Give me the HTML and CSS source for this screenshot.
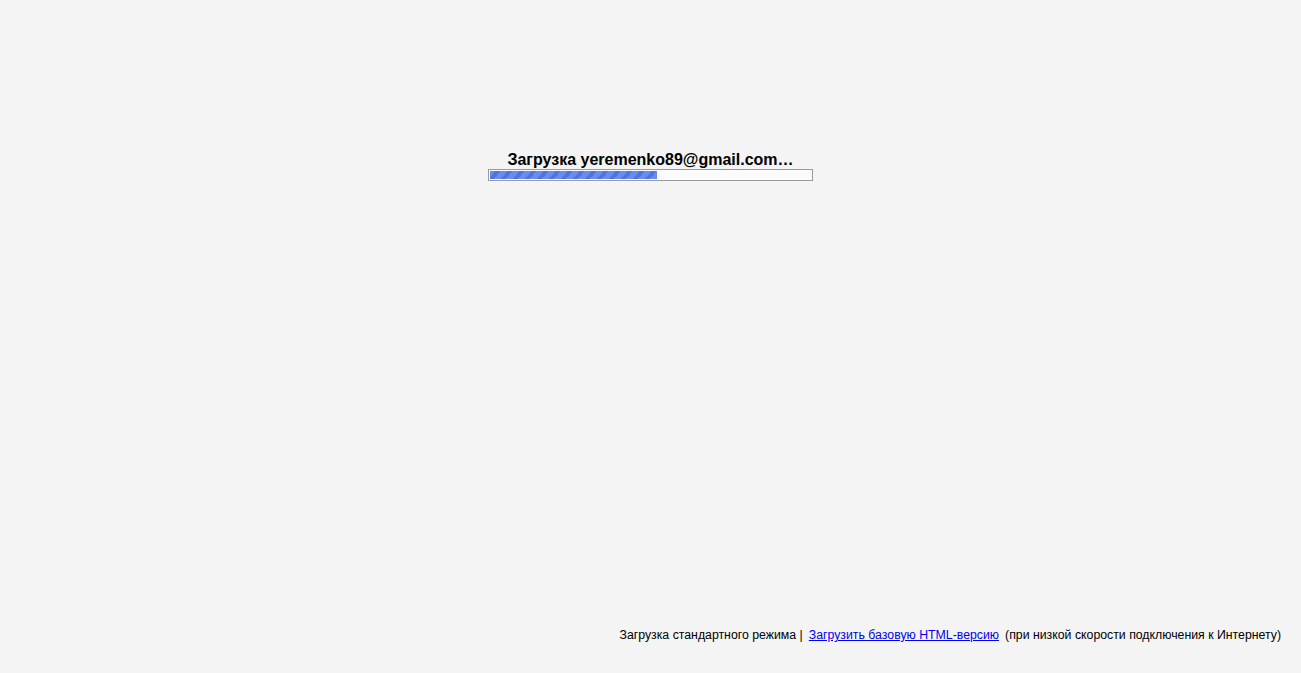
FILE: index.html
```html
<!DOCTYPE html>
<html lang="ru">
<head>
<meta charset="utf-8">
<title>Gmail</title>
<link rel="stylesheet" href="styles.css">
</head>
<body>
<div class="page">
  <div class="loading">
    <div class="loading-title">Загрузка yeremenko89@gmail.com…</div>
    <div class="progress"><div class="progress-fill" style="width: 52%"></div></div>
  </div>
  <div class="footer">
    <span>Загрузка стандартного режима |</span>
    <a href="#" class="basic-link">Загрузить базовую HTML-версию</a>
    <span>(при низкой скорости подключения к Интернету)</span>
  </div>
</div>
</body>
</html>
```

FILE: styles.css
```css
html, body {
  margin: 0;
  padding: 0;
  background: #f4f4f4;
}
.page {
  height: 673px;
  display: flex;
  flex-direction: column;
  font-family: "Liberation Sans", Arial, sans-serif;
  color: #000;
}
.loading {
  padding-top: 150px;
  display: flex;
  flex-direction: column;
  align-items: center;
}
.loading-title {
  font-size: 16px;
  font-weight: bold;
  line-height: 19px;
}
.progress {
  width: 321px;
  height: 8px;
  border: 1px solid #9a9a9a;
  padding: 1px;
  background: #fbfbfb;
}
.progress-fill {
  height: 100%;
  background-color: #668cf0;
  background-image: repeating-linear-gradient(
    -50deg,
    #668cf0 0px,
    #668cf0 5.5px,
    #5274da 5.5px,
    #5274da 9.2px
  );
}
.footer {
  margin-top: auto;
  margin-bottom: 31px;
  padding-right: 20px;
  display: flex;
  justify-content: flex-end;
  gap: 6px;
  font-size: 12.3px;
  line-height: 14px;
}
.basic-link {
  color: #0000ee;
  text-decoration: underline;
}
```
